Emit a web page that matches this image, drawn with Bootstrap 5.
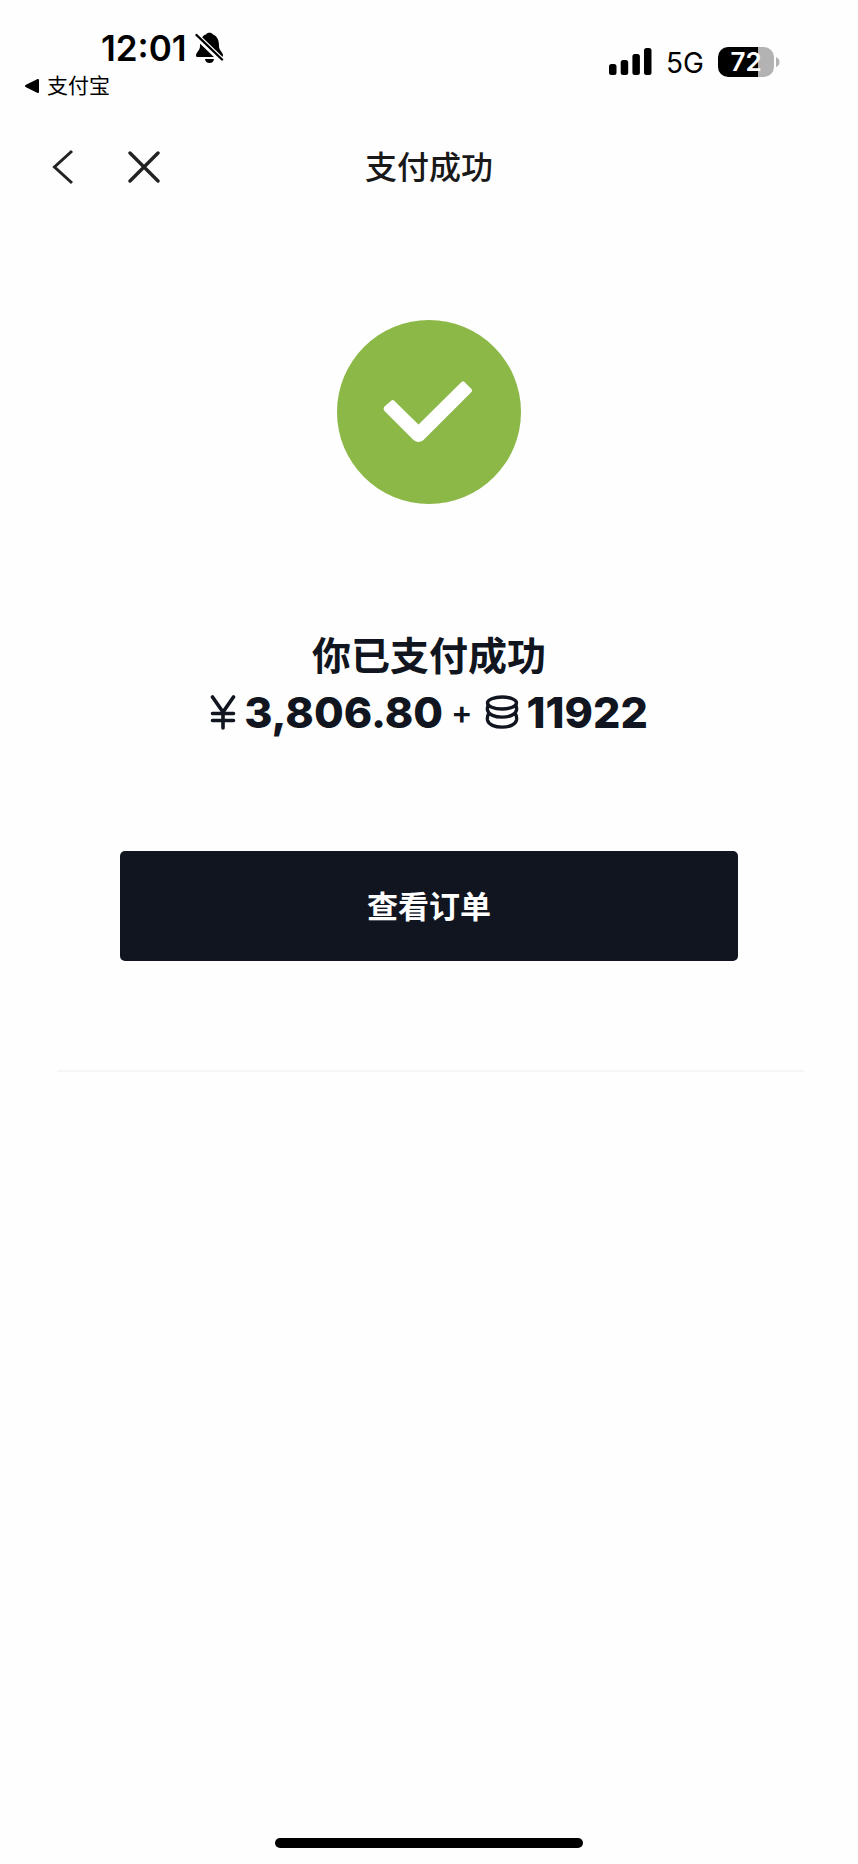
<!DOCTYPE html>
<html lang="zh-CN">
<head>
<meta charset="utf-8">
<meta name="viewport" content="width=device-width, initial-scale=1">
<title>支付成功</title>
<link href="https://cdn.jsdelivr.net/npm/bootstrap@5.3.0/dist/css/bootstrap.min.css" rel="stylesheet">
<style>
  body { font-family: Inter, "Noto Sans CJK SC", sans-serif; background: #fefefe; color: #101520; }
  svg { display: block; flex: none; }
  .status-bar { color: #000; padding: 28px 78px 0 24px; height: 104px; }
  .clock { font-size: 35px; line-height: 40px; font-weight: 600; padding-left: 77px; gap: 8px; }
  .back-app { font-size: 21px; line-height: 36px; gap: 7px; color: #000; }
  .signals { gap: 14px; margin-top: 16px; height: 36px; }
  .network { font-size: 28px; line-height: 36px; padding-top: 2px; }
  .battery { width: 56px; height: 30px; border-radius: 10px; font-size: 26px; line-height: 30px; font-weight: 600;
    color: #fff; background: linear-gradient(90deg, #000 72%, #b3b3b3 72%); }
  .title-bar { display: grid; grid-template-columns: 1fr auto 1fr; height: 126px; padding: 0 46px; }
  .title-bar h1 { font-size: 32px; line-height: 48px; font-weight: 500; color: #191919; padding-top: 2px; }
  .icon-btn { padding: 6px; border: 0; background: none; color: #222; }
  .nav-icons { gap: 40px; }
  .result { padding: 90px 120px 0; }
  .done-text { font-size: 39px; line-height: 56px; font-weight: 700; margin-top: 124px; }
  .amount { font-size: 43px; line-height: 56px; font-weight: 800; }
  .plus { font-size: 32px; line-height: 48px; font-weight: 600; padding-top: 2px; }
  .btn-order { --bs-btn-bg: #101520; --bs-btn-color: #fff; --bs-btn-hover-bg: #242b3a; --bs-btn-hover-color: #fff;
    height: 110px; margin-top: 111px; padding-top: 8px; border: 0; border-radius: 5px; font-size: 31px; font-weight: 700; }
  .divider { margin: 109px 54px 0 57px; border-top: 2px solid #f5f5f5; opacity: 1; }
  .home-bar { width: 36%; height: 10px; border-radius: 5px; background: #000; margin-bottom: 16px; }
</style>
</head>
<body class="min-vh-100 d-flex flex-column">
<header>
  <div class="status-bar d-flex justify-content-between">
    <div>
      <div class="clock d-flex align-items-center">
        <span>12:01</span>
        <svg width="29" height="32" viewBox="0 0 29 32" aria-hidden="true">
          <path d="M1 23.500C1 20 5 19 5 14C5 7 8 3 11 2.500C12 0.300 17 0.300 18 2.500C22 4 24 8 24 14C24 19 28 20 28 23.500Q28 25 26.500 25H2.500Q1 25 1 23.500ZM10 27H19Q18.500 31 14.500 31T10 27Z" fill="currentColor"/>
          <path d="M1.500 4L27 28.500" stroke="#fefefe" stroke-width="6"/>
          <path d="M1.500 3L27 27.500" stroke="currentColor" stroke-width="2.400" stroke-linecap="round"/>
        </svg>
      </div>
      <a href="#" class="back-app d-flex align-items-center text-decoration-none">
        <svg width="16" height="16" viewBox="0 0 16 16" aria-hidden="true"><path d="M2 8L14 2V14Z" fill="currentColor" stroke="currentColor" stroke-width="2" stroke-linejoin="round"/></svg>
        <span>支付宝</span>
      </a>
    </div>
    <div class="signals d-flex align-items-center">
      <svg width="43" height="28" viewBox="0 0 43 28" fill="currentColor" aria-label="信号">
        <rect y="16" width="7.500" height="11" rx="2.500"/><rect x="11.700" y="12" width="7.500" height="15" rx="2.500"/>
        <rect x="23.400" y="6" width="7.500" height="21" rx="2.500"/><rect x="35" width="7.500" height="27" rx="2.500"/>
      </svg>
      <span class="network">5G</span>
      <div class="d-flex align-items-center">
        <span class="battery text-center">72</span>
        <svg width="6" height="10" viewBox="0 0 6 10" aria-hidden="true"><path d="M2 0Q5.500 1.500 5.500 5T2 10Z" fill="#b3b3b3"/></svg>
      </div>
    </div>
  </div>
  <nav class="title-bar align-items-center">
    <div class="nav-icons d-flex">
      <button type="button" class="icon-btn" aria-label="返回">
        <svg width="24" height="36" viewBox="0 0 24 36" fill="none" stroke="currentColor" stroke-width="3"><path d="M20 2L2.500 18L20 34"/></svg>
      </button>
      <button type="button" class="icon-btn" aria-label="关闭">
        <svg width="32" height="36" viewBox="0 0 32 36" fill="none" stroke="currentColor" stroke-width="3.400" stroke-linecap="round"><path d="M2 4L30 32M30 4L2 32"/></svg>
      </button>
    </div>
    <h1 class="mb-0">支付成功</h1>
  </nav>
</header>
<main class="flex-grow-1">
  <section class="result d-flex flex-column align-items-center">
    <svg width="184" height="184" viewBox="0 0 184 184" aria-hidden="true">
      <circle cx="92" cy="92" r="92" fill="#8bb846"/>
      <path d="M48 86L54.500 80.500Q56 79.500 57.500 81L81.500 104.500L124.500 62Q126 60.500 127.500 62L134.500 69Q136 70.500 134.500 72L86.500 120Q81.500 124 76.500 120L47.500 91Q45.500 88.500 48 86Z" fill="#fff"/>
    </svg>
    <h2 class="done-text mb-0">你已支付成功</h2>
    <div class="amount d-flex align-items-center">
      <svg class="me-2" width="26" height="36" viewBox="0 0 26 36" fill="none" stroke="currentColor" stroke-width="3.600" stroke-linecap="round" aria-label="¥"><path d="M2.500 3L13 18L23.500 3M13 18V34M2.500 19.500H23.500M2.500 26.500H23.500"/></svg>
      <span>3,806.80</span>
      <span class="plus mx-2">+</span>
      <svg class="ms-1 me-2" width="34" height="34" viewBox="0 0 34 34" fill="none" stroke="currentColor" stroke-width="3.400" aria-label="积分">
        <ellipse cx="17" cy="8" rx="14.500" ry="6"/>
        <path d="M3.500 10Q2 12 2.500 15C4 24.500 30 24.500 31.500 15Q32 12 30.500 10M3.500 19Q2 21 2.500 25C4 34.500 30 34.500 31.500 25Q32 21 30.500 19"/>
      </svg>
      <span>11922</span>
    </div>
    <button type="button" class="btn btn-order w-100">查看订单</button>
  </section>
  <hr class="divider">
</main>
<footer class="d-flex justify-content-center"><div class="home-bar"></div></footer>
<script src="https://cdn.jsdelivr.net/npm/bootstrap@5.3.0/dist/js/bootstrap.bundle.min.js"></script>
</body>
</html>
